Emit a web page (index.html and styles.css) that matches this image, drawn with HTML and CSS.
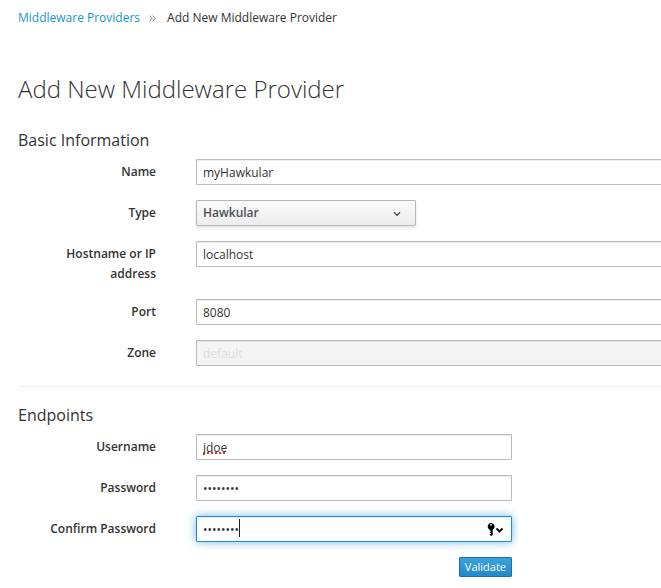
FILE: index.html
```html
<!DOCTYPE html>
<html lang="en">
<head>
<meta charset="utf-8">
<title>Add New Middleware Provider</title>
<link rel="stylesheet" href="styles.css">
</head>
<body>
<nav class="breadcrumb" aria-label="Breadcrumb">
  <a href="#">Middleware Providers</a>
  <svg class="separator" viewBox="0 0 7 7" aria-hidden="true"><path d="M.7.7 3 3.5.7 6.3M3.7.7 6 3.5 3.7 6.3"/></svg>
  <span>Add New Middleware Provider</span>
</nav>
<main>
  <h1>Add New Middleware Provider</h1>
  <form>
    <section class="group">
      <h2>Basic Information</h2>
      <div class="row">
        <label for="name">Name</label>
        <input class="control" id="name" type="text" value="myHawkular">
      </div>
      <div class="row">
        <label for="type">Type</label>
        <div class="picker">
          <select id="type"><option>Hawkular</option></select>
          <svg class="chevron" viewBox="0 0 8 6" aria-hidden="true"><path d="M1 1.2 4 4.2 7 1.2"/></svg>
        </div>
      </div>
      <div class="row">
        <label for="host">Hostname or IP address</label>
        <input class="control" id="host" type="text" value="localhost">
      </div>
      <div class="row">
        <label for="port">Port</label>
        <input class="control" id="port" type="text" value="8080">
      </div>
      <div class="row">
        <label for="zone">Zone</label>
        <input class="control" id="zone" type="text" value="default" disabled>
      </div>
    </section>
    <hr>
    <section class="group endpoints">
      <h2>Endpoints</h2>
      <div class="row">
        <label for="user">Username</label>
        <input class="control misspelled" id="user" type="text" value="jdoe">
      </div>
      <div class="row">
        <label for="password">Password</label>
        <input class="control" id="password" type="password" value="password">
      </div>
      <div class="row">
        <label for="confirm">Confirm Password</label>
        <div class="secret">
          <input class="control active" id="confirm" type="password" value="password">
          <span class="caret"></span>
          <svg class="key" viewBox="0 0 17 14" aria-hidden="true">
            <path fill-rule="evenodd" d="M4 0a3.500 3.500 0 0 1 1.700 6.600V12L4.200 13 2.800 12V11H3.800V10H2.800V8.800H3.800V7.800H2.800V6.700A3.500 3.500 0 0 1 4 0ZM4 1a.8.8 0 1 0 .01 0Z"/>
            <path class="key-arrow" d="M9.500 5.500 12.500 8.500 15.500 5.500"/>
          </svg>
        </div>
      </div>
      <div class="actions"><button type="button">Validate</button></div>
    </section>
  </form>
</main>
</body>
</html>
```
FILE: styles.css
```css
* {
  box-sizing: border-box;
}

body {
  margin: 0;
  padding: 8px 0 8px 18px;
  overflow: hidden;
  background: #fff;
  color: #333;
  font: 12px/20px "Open Sans", sans-serif;
}

.breadcrumb {
  display: flex;
  align-items: center;
}

.breadcrumb a {
  color: #1a94d2;
  text-decoration: none;
}

.separator {
  width: 7px;
  height: 7px;
  margin: 1px 11px 0 9px;
  fill: none;
  stroke: #808080;
}

h1 {
  margin: 44px 0 24px;
  font-size: 24px;
  font-weight: 300;
  line-height: 34px;
}

h2 {
  margin: 0 0 9px;
  font-size: 16px;
  font-weight: 400;
  line-height: 20px;
}

.group {
  display: flex;
  flex-direction: column;
}

.row {
  display: grid;
  grid-template-columns: 138px minmax(0, 1fr);
  column-gap: 40px;
  align-items: start;
  margin: 0 -2px 15px 0;
}

label {
  padding-top: 3px;
  font-weight: 600;
  text-align: right;
}

.row > label {
  padding-left: 20px;
}

.control {
  width: 100%;
  height: 26px;
  padding: 2px 6px;
  border: 1px solid #bababa;
  border-radius: 1px;
  background: #fff;
  box-shadow: inset 0 1px 1px rgba(0, 0, 0, 0.075);
  color: #333;
  font: inherit;
}

.control:disabled {
  background: #f4f4f4;
  color: #dcdee3;
}

.misspelled {
  text-decoration: underline dotted #f03030 2px;
  text-decoration-skip-ink: none;
  text-underline-offset: 1px;
}

.picker {
  position: relative;
  max-width: 220px;
}

.picker select {
  display: block;
  width: 100%;
  height: 26px;
  padding: 0 6px 1px;
  appearance: none;
  border: 1px solid #b7b7b7;
  border-radius: 1px;
  background: linear-gradient(#fafafa, #ededed);
  box-shadow: 0 2px 3px rgba(0, 0, 0, 0.1);
  color: #4d5258;
  font: 600 12px/20px "Open Sans", sans-serif;
}

.chevron {
  position: absolute;
  top: 11px;
  right: 15px;
  width: 8px;
  height: 6px;
  fill: none;
  stroke: #4d5258;
  stroke-width: 1.4;
  pointer-events: none;
}

hr {
  margin: 5px 0 18px;
  border: 0;
  border-top: 1px solid #eee;
}

.endpoints {
  max-width: 494px;
}

.endpoints .row {
  margin-right: 0;
}

.endpoints .row > label {
  padding-left: 0;
}

.secret {
  position: relative;
}

.secret .control {
  display: block;
}

.control.active {
  border-color: #1f8dd0;
  box-shadow: inset 0 1px 1px rgba(0, 0, 0, 0.075), 0 0 8px rgba(0, 136, 206, 0.6);
}

.caret {
  position: absolute;
  top: 3px;
  left: 43px;
  width: 1px;
  height: 18px;
  background: #222;
}

.key {
  position: absolute;
  top: 7px;
  right: 8px;
  width: 17px;
  height: 14px;
}

.key-arrow {
  fill: none;
  stroke: #000;
  stroke-width: 1.8;
}

.actions {
  display: flex;
  justify-content: flex-end;
}

button {
  height: 20px;
  padding: 0 5px;
  border: 1px solid #1a70a5;
  border-radius: 1px;
  background: linear-gradient(#3aa3da, #2388c9);
  color: #fff;
  font: 400 11px/18px "Open Sans", sans-serif;
}
```
